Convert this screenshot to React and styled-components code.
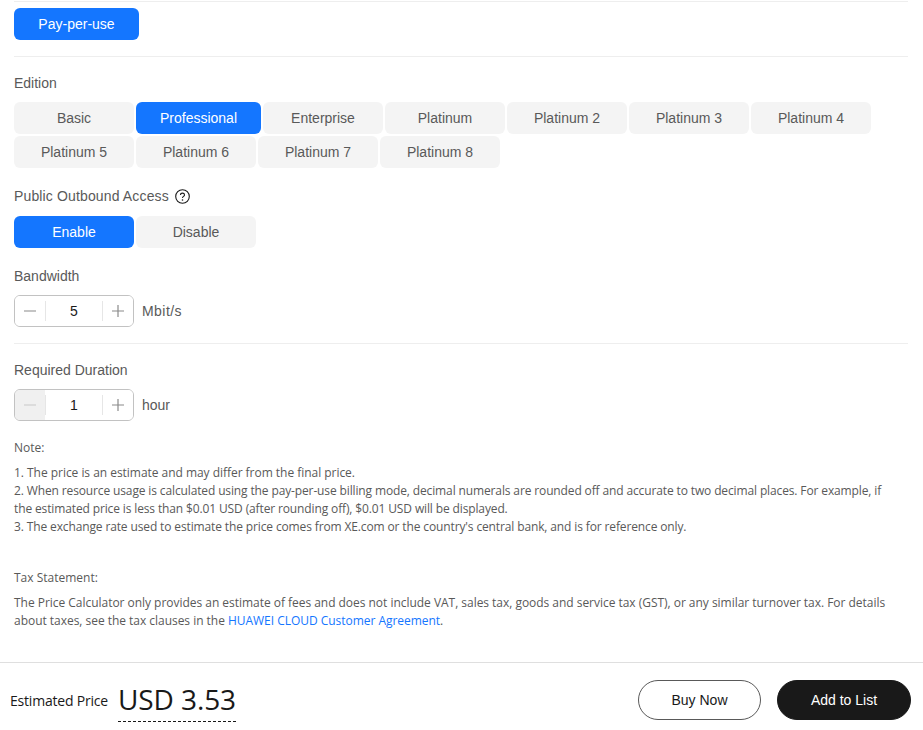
import React from "react";
import styled, { createGlobalStyle } from "styled-components";

const GlobalStyle = createGlobalStyle`
  html, body {
    margin: 0;
    padding: 0;
    background: #fff;
    height: 100%;
    overflow: hidden;
  }
  body {
    font-family: "Liberation Sans", Arial, sans-serif;
    color: #595959;
  }
`;

const editions = [
  "Basic",
  "Professional",
  "Enterprise",
  "Platinum",
  "Platinum 2",
  "Platinum 3",
  "Platinum 4",
  "Platinum 5",
  "Platinum 6",
  "Platinum 7",
  "Platinum 8",
];

const Stepper = ({ value, disabled }) => (
  <StepBox>
    <StepBtn $off={disabled}>
      <svg width="12" height="12" viewBox="0 0 12 12">
        <path d="M0 6h12" stroke={disabled ? "#c7c7c7" : "#8a8a8a"} strokeWidth="1.2" />
      </svg>
    </StepBtn>
    <StepValue>{value}</StepValue>
    <StepBtn>
      <svg width="12" height="12" viewBox="0 0 12 12">
        <path d="M0 6h12M6 0v12" stroke="#8a8a8a" strokeWidth="1.2" />
      </svg>
    </StepBtn>
  </StepBox>
);

const App = () => {
  return (
    <Page>
      <GlobalStyle />
      <Content>
        <BillingRow>
          <Option $active $wide>Pay-per-use</Option>
        </BillingRow>

        <Label>Edition</Label>
        <Options>
          {editions.map((name) => (
            <Option key={name} $active={name === "Professional"} $wide={name === "Professional"}>
              {name}
            </Option>
          ))}
        </Options>

        <Label $gap $tall>
          Public Outbound Access
          <svg width="15" height="15" viewBox="0 0 15 15" fill="none">
            <circle cx="7.5" cy="7.5" r="6.8" stroke="#1a1a1a" strokeWidth="1.1" />
            <path
              d="M5.5 6c0-1.2.9-1.9 2-1.9s2 .7 2 1.8c0 1.4-2 1.5-2 3"
              stroke="#1a1a1a"
              strokeWidth="1.1"
            />
            <circle cx="7.5" cy="11" r=".8" fill="#1a1a1a" />
          </svg>
        </Label>
        <Options>
          <Option $active>Enable</Option>
          <Option>Disable</Option>
        </Options>

        <Label $gap>Bandwidth</Label>
        <StepRow>
          <Stepper value="5" />
          <Unit $loose>Mbit/s</Unit>
        </StepRow>

        <Divider />

        <Label>Required Duration</Label>
        <StepRow>
          <Stepper value="1" disabled />
          <Unit>hour</Unit>
        </StepRow>

        <Notes>
          <NoteTitle>Note:</NoteTitle>
          <NoteText $spacing="-0.035px">
            1. The price is an estimate and may differ from the final price.
          </NoteText>
          <NoteText>
            2. When resource usage is calculated using the pay-per-use billing mode, decimal numerals are
            rounded off and accurate to two decimal places. For example, if
            <br />
            the estimated price is less than $0.01 USD (after rounding off), $0.01 USD will be displayed.
          </NoteText>
          <NoteText>
            3. The exchange rate used to estimate the price comes from XE.com or the country's central
            bank, and is for reference only.
          </NoteText>
          <NoteTitle $tax>Tax Statement:</NoteTitle>
          <NoteText $spacing="-0.03px">
            The Price Calculator only provides an estimate of fees and does not include VAT, sales tax,
            goods and service tax (GST), or any similar turnover tax. For details about taxes, see the
            tax clauses in the <NoteLink href="#">HUAWEI CLOUD Customer Agreement</NoteLink>.
          </NoteText>
        </Notes>
      </Content>

      <Footer>
        <PriceBlock>
          <PriceLabel>Estimated Price</PriceLabel>
          <Price>USD 3.53</Price>
        </PriceBlock>
        <Actions>
          <Action>Buy Now</Action>
          <Action $dark>Add to List</Action>
        </Actions>
      </Footer>
    </Page>
  );
};

const Page = styled.div`
  width: 923px;
  height: 730px;
  display: flex;
  flex-direction: column;
  overflow: hidden;
`;

const Content = styled.div`
  flex: 1;
  padding: 1px 15px 0 14px;
`;

const BillingRow = styled.div`
  display: flex;
  padding: 6px 0 16px;
  border-top: 1px solid #eeeeee;
  border-bottom: 1px solid #eeeeee;
  margin-bottom: 17px;
`;

const Label = styled.div`
  display: flex;
  align-items: center;
  gap: 6px;
  height: 18px;
  font-size: 14px;
  line-height: 18px;
  letter-spacing: ${(props) => (props.$tall ? "0.14px" : "0")};
  color: #595959;
  margin-top: ${(props) => (props.$gap ? "19px" : "0")};
  margin-bottom: ${(props) => (props.$tall ? "11px" : "10px")};
`;

const Options = styled.div`
  display: flex;
  flex-wrap: wrap;
  gap: 2px;
`;

const Option = styled.div`
  width: ${(props) => (props.$wide ? "125px" : "120px")};
  height: 32px;
  display: flex;
  align-items: center;
  justify-content: center;
  border-radius: 6px;
  font-size: 14px;
  background: ${(props) => (props.$active ? "#1476ff" : "#f4f4f4")};
  color: ${(props) => (props.$active ? "#fff" : "#595959")};
`;

const StepRow = styled.div`
  display: flex;
  align-items: center;
  gap: 8px;
`;

const StepBox = styled.div`
  width: 120px;
  height: 32px;
  box-sizing: border-box;
  display: flex;
  align-items: stretch;
  border: 1px solid #c2c2c2;
  border-radius: 6px;
  overflow: hidden;
`;

const StepBtn = styled.div`
  width: 30px;
  flex: none;
  display: flex;
  align-items: center;
  justify-content: center;
  background: ${(props) => (props.$off ? "#f0f0f0" : "#fff")};
`;

const StepValue = styled.div`
  flex: 1;
  display: flex;
  align-items: center;
  justify-content: center;
  font-size: 14px;
  color: #191919;
  position: relative;
  &::before,
  &::after {
    content: "";
    position: absolute;
    top: 5px;
    bottom: 5px;
    width: 1px;
    background: #e6e6e6;
  }
  &::before {
    left: 0;
  }
  &::after {
    right: 0;
  }
`;

const Unit = styled.span`
  font-size: 14px;
  letter-spacing: ${(props) => (props.$loose ? "0.45px" : "0")};
  color: #595959;
`;

const Divider = styled.div`
  height: 1px;
  background: #eeeeee;
  margin: 16px 0 17px;
`;

const Notes = styled.div`
  margin-top: 18px;
  font-family: "Open Sans", "Noto Sans", sans-serif;
  font-size: 12px;
  line-height: 18px;
  color: #595959;
`;

const NoteTitle = styled.div`
  margin-top: ${(props) => (props.$tax ? "33px" : "0")};
  margin-bottom: 7px;
`;

const NoteText = styled.div`
  letter-spacing: ${(props) => props.$spacing || "-0.13px"};
`;

const NoteLink = styled.a`
  color: #1476ff;
  text-decoration: none;
`;

const Footer = styled.div`
  height: 68px;
  flex: none;
  box-sizing: border-box;
  border-top: 1px solid #dfdfdf;
  display: flex;
  align-items: center;
  justify-content: space-between;
  padding: 7px 12px 0 10px;
`;

const PriceBlock = styled.div`
  display: flex;
  align-items: center;
  gap: 10px;
`;

const PriceLabel = styled.span`
  font-family: "Open Sans", "Noto Sans", sans-serif;
  font-size: 14px;
  letter-spacing: -0.2px;
  color: #191919;
`;

const Price = styled.span`
  font-family: "Open Sans", "Noto Sans", sans-serif;
  font-size: 28px;
  line-height: 43px;
  letter-spacing: -0.1px;
  color: #191919;
  border-bottom: 1px dashed #191919;
`;

const Actions = styled.div`
  display: flex;
  gap: 16px;
`;

const Action = styled.div`
  width: ${(props) => (props.$dark ? "134px" : "123px")};
  height: 40px;
  box-sizing: border-box;
  display: flex;
  align-items: center;
  justify-content: center;
  border-radius: 20px;
  font-size: 14px;
  border: 1px solid ${(props) => (props.$dark ? "#191919" : "#595959")};
  background: ${(props) => (props.$dark ? "#191919" : "#fff")};
  color: ${(props) => (props.$dark ? "#fff" : "#191919")};
`;

export default App;
